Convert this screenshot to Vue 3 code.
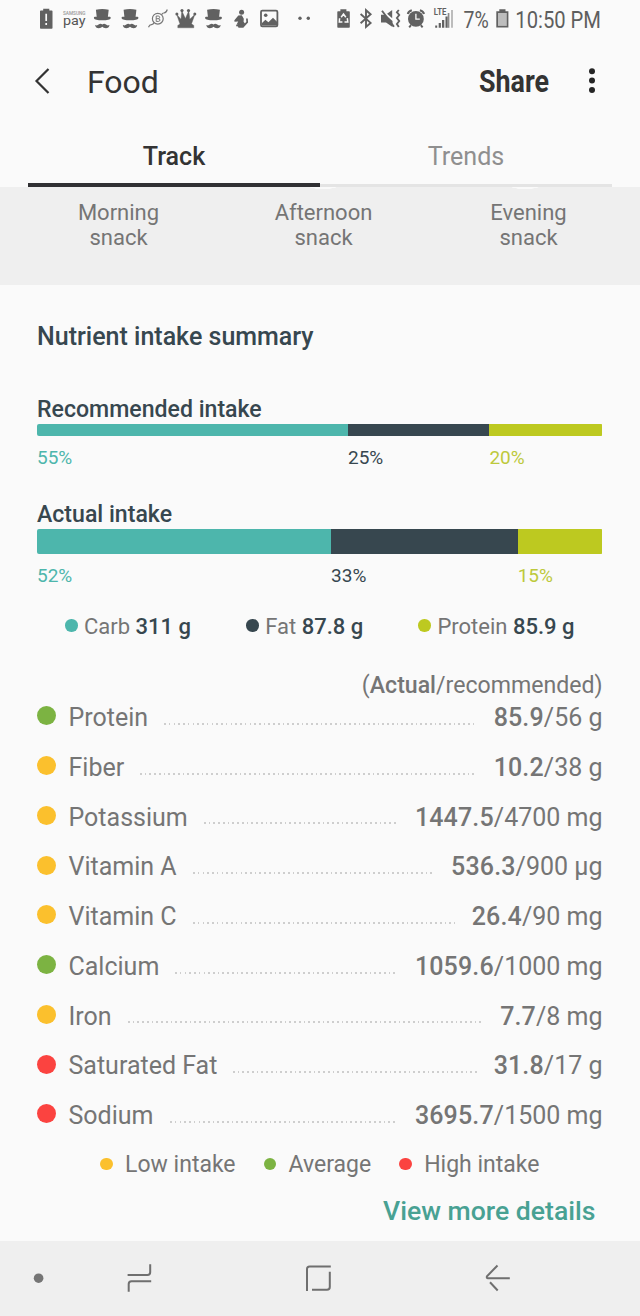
<script setup>
const meals = ['Morning', 'Afternoon', 'Evening']
const recommended = [
  { key: 'carb', pct: 55 },
  { key: 'fat', pct: 25 },
  { key: 'protein', pct: 20 },
]
const actual = [
  { key: 'carb', pct: 52 },
  { key: 'fat', pct: 33 },
  { key: 'protein', pct: 15 },
]
const macros = [
  { key: 'carb', name: 'Carb', value: '311 g' },
  { key: 'fat', name: 'Fat', value: '87.8 g' },
  { key: 'protein', name: 'Protein', value: '85.9 g' },
]
const nutrients = [
  { name: 'Protein', level: 'average', actual: '85.9', target: '/56 g' },
  { name: 'Fiber', level: 'low', actual: '10.2', target: '/38 g' },
  { name: 'Potassium', level: 'low', actual: '1447.5', target: '/4700 mg' },
  { name: 'Vitamin A', level: 'low', actual: '536.3', target: '/900 µg' },
  { name: 'Vitamin C', level: 'low', actual: '26.4', target: '/90 mg' },
  { name: 'Calcium', level: 'average', actual: '1059.6', target: '/1000 mg' },
  { name: 'Iron', level: 'low', actual: '7.7', target: '/8 mg' },
  { name: 'Saturated Fat', level: 'high', actual: '31.8', target: '/17 g' },
  { name: 'Sodium', level: 'high', actual: '3695.7', target: '/1500 mg' },
]
const levels = [
  { level: 'low', name: 'Low intake' },
  { level: 'average', name: 'Average' },
  { level: 'high', name: 'High intake' },
]
</script>

<template>
  <div class="screen">
    <header class="status">
      <svg class="notifications" width="276" height="40" viewBox="38 0 276 40" fill="#616161">
        <defs>
          <g id="gentleman">
            <path d="M2.6 0.6Q9 -1 15.4 0.6L14.6 7.6H16.6Q17.8 7.8 17.3 9.2Q16.6 11 9 11Q1.4 11 0.7 9.2Q0.2 7.8 1.4 7.6H3.4Z" />
            <path d="M9 15.2Q7 13.9 5.3 15.4Q4 16.8 1.8 15.8Q2.4 19 5.4 19Q8 18.8 9 17.5Q10 18.8 12.6 19Q15.6 19 16.2 15.8Q14 16.8 12.7 15.4Q11 13.9 9 15.2Z" />
          </g>
        </defs>
        <path d="M40 11.3Q40 10.5 40.8 10.5H43.2V8.7H49.3V10.5H51.7Q52.5 10.5 52.5 11.3V28Q52.5 28.7 51.7 28.7H40.8Q40 28.7 40 28Z" />
        <path d="M46.2 13.8V21M46.2 23V25" stroke="#fafafa" stroke-width="1.7" />
        <text x="63" y="14.8" class="brand-small" textLength="22.5" lengthAdjust="spacingAndGlyphs">SAMSUNG</text>
        <text x="63" y="24.8" class="brand" textLength="22.5" lengthAdjust="spacingAndGlyphs">pay</text>
        <use href="#gentleman" x="93.3" y="9.2" />
        <use href="#gentleman" x="121" y="9.2" />
        <g fill="none" stroke="#777" stroke-width="1.2">
          <circle cx="157.8" cy="18.7" r="5.4" />
          <path d="M148.5 27.2Q149.6 24.4 151.6 24.6Q153.4 24.4 154 22.6M161.6 14.8Q162.4 12.8 164 13Q166.4 12.6 167.3 9.5" />
          <path d="M156.2 16V21.4H158.5Q160 21.2 160 20Q159.8 18.8 158.3 18.7Q159.7 18.5 159.7 17.3Q159.5 16 158.2 16ZM156.2 18.7H158.3" stroke-width="1" />
        </g>
        <path d="M179.6 23L176.6 14.2L181 19.2L181.8 10.8L185.4 18.6L188.8 10.8L189.8 19.2L195 14.2L191.8 23Q191.2 23.6 192 24.3L193.8 25.4V27.8H177.8V25.4L179.6 24.3Q180.2 23.6 179.6 23Z" stroke="#616161" stroke-width="0.4" />
        <circle cx="176.9" cy="14.1" r="1.5" /><circle cx="182" cy="10.6" r="1.6" />
        <circle cx="188.5" cy="10.6" r="1.6" /><circle cx="194.8" cy="14.1" r="1.5" />
        <use href="#gentleman" x="204.5" y="9.2" />
        <circle cx="241.6" cy="12.3" r="2.5" />
        <path d="M238.3 15.6L241.8 15.2L243.8 18.8L243.6 21.8L245.1 23.8L243.5 27.7H238.5L237 23.8L238.2 21.4L234.6 21.8Q233.8 21 234.8 19.8Z" />
        <path d="M236.2 25.3L243.8 25.8L247.2 22.2L246.9 18.5" fill="none" stroke="#616161" stroke-width="1.7" />
        <rect x="261" y="10.7" width="16.4" height="15.6" rx="1.3" fill="none" stroke="#616161" stroke-width="1.8" />
        <circle cx="265.7" cy="15.2" r="1.8" />
        <path d="M262 25.5V23L265.4 19.7L268.4 22.2L273 17.8L277 21.8V25.5Z" />
        <circle cx="300" cy="18.3" r="1.7" /><circle cx="308.3" cy="18.3" r="1.7" />
      </svg>
      <svg class="system" width="269" height="40" viewBox="334 0 269 40" fill="#616161">
        <path d="M337.3 12Q337.3 11.2 338 11.2H340.4V9.2H346.4V11.2H349Q349.8 11.2 349.8 12V27Q349.8 27.7 349 27.7H338Q337.3 27.7 337.3 27Z" />
        <path d="M341.2 17.3L343.5 14L345.8 17.3M339.6 18.2L339.3 22H342.4M347.3 18.2L347.8 22H344.5" fill="none" stroke="#fafafa" stroke-width="1.5" />
        <path d="M360.6 14L370.6 22.9L366 27V10.2L370.6 14.3L360.6 23.2" fill="none" stroke="#616161" stroke-width="1.9" />
        <path d="M381 14.8H385.3L392.5 21V27L386 22.4H381Z" />
        <path d="M387.1 13.7L392.2 10V18.2Z" />
        <path d="M382 10.8L394 26.8" stroke="#616161" stroke-width="1.9" />
        <path d="M398.8 10L396.9 12.2L399.2 15L396.9 18L399.2 21L396.9 24L398.8 27" fill="none" stroke="#616161" stroke-width="1.9" />
        <circle cx="415.9" cy="18.9" r="7.9" />
        <path d="M407.8 14Q408.3 11.2 411.8 10.2M419.9 10.2Q423.5 11.2 424 14M411 25.2L409.2 27.3M420.8 25.2L422.6 27.3" fill="none" stroke="#616161" stroke-width="2" />
        <path d="M415.9 13.8V19.1H419.8" fill="none" stroke="#fafafa" stroke-width="1.3" />
        <text x="433.8" y="15.3" class="lte" textLength="12.5" lengthAdjust="spacingAndGlyphs">LTE</text>
        <path d="M435.2 25.5H437.2V27.8H435.2ZM438.7 23H440.9V27.8H438.7ZM442 20H444.3V27.8H442ZM445.5 16.5H447.7V27.8H445.5Z" />
        <path d="M447.7 13H449.4V27.8H447.7Z" fill="#8a8a8a" />
        <path d="M451 10H453V27.8H451Z" fill="#bcbcbc" />
        <text x="463.5" y="27.5" class="clock" textLength="25.2" lengthAdjust="spacingAndGlyphs">7%</text>
        <path d="M496.3 11.2H499.3V9.2H505.5V11.2H508.4V27.6H496.3Z" />
        <path d="M498 13H506.8V25.9H498Z" fill="#bdbdbd" />
        <text x="515.3" y="27.5" class="clock" textLength="85.7" lengthAdjust="spacingAndGlyphs">10:50 PM</text>
      </svg>
    </header>

    <div class="appbar">
      <svg class="back" width="18" height="28" viewBox="0 0 18 28"><path d="M15.5 2L3.5 14L15.5 26" fill="none" stroke="#333" stroke-width="2.2" /></svg>
      <h1>Food</h1>
      <svg class="share" width="72" height="40" viewBox="0 0 72 40"><text x="1" y="30" textLength="70" lengthAdjust="spacingAndGlyphs">Share</text></svg>
      <svg class="more" width="8" height="28" viewBox="0 0 8 28" fill="#252525"><circle cx="4" cy="4.2" r="3" /><circle cx="4" cy="13.6" r="3" /><circle cx="4" cy="23" r="3" /></svg>
    </div>

    <nav class="tabs">
      <div class="tab active"><span>Track</span></div>
      <div class="tab"><span>Trends</span></div>
    </nav>

    <section class="meals">
      <div v-for="m in meals" :key="m" class="meal">{{ m }}<br />snack</div>
    </section>

    <main class="summary">
      <h2>Nutrient intake summary</h2>

      <h3 class="rec-title">Recommended intake</h3>
      <div class="bar thin">
        <i v-for="s in recommended" :key="s.key" :class="s.key" :style="{ width: s.pct + '%' }"></i>
      </div>
      <div class="pcts">
        <span v-for="s in recommended" :key="s.key" :class="s.key" :style="{ width: s.pct + '%' }">{{ s.pct }}%</span>
      </div>

      <h3 class="act-title">Actual intake</h3>
      <div class="bar thick">
        <i v-for="s in actual" :key="s.key" :class="s.key" :style="{ width: s.pct + '%' }"></i>
      </div>
      <div class="pcts">
        <span v-for="s in actual" :key="s.key" :class="s.key" :style="{ width: s.pct + '%' }">{{ s.pct }}%</span>
      </div>

      <div class="macros">
        <div v-for="m in macros" :key="m.key" class="macro">
          <i class="dot" :class="m.key"></i><span>{{ m.name }} <b>{{ m.value }}</b></span>
        </div>
      </div>

      <div class="caption"><span>(<b>Actual</b>/recommended)</span></div>
      <div class="rows">
        <div v-for="n in nutrients" :key="n.name" class="row">
          <i class="big-dot" :class="n.level"></i>
          <span class="name">{{ n.name }}</span>
          <span class="leader"></span>
          <span class="value"><b>{{ n.actual }}</b>{{ n.target }}</span>
        </div>
      </div>

      <div class="levels">
        <div v-for="l in levels" :key="l.level" class="level">
          <i class="dot" :class="l.level"></i><span>{{ l.name }}</span>
        </div>
      </div>
      <div class="details"><span>View more details</span></div>
    </main>

    <footer class="navbar">
      <svg width="640" height="75" viewBox="0 1241 640 75" fill="none" stroke="#6f6f6f" stroke-width="2">
        <circle cx="38.6" cy="1278.2" r="4.8" fill="#757575" stroke="none" />
        <path d="M127.6 1275H147.5Q150.2 1275 150.2 1272.3V1264.2M151.2 1281.2H131.5Q128.7 1281.2 128.7 1284V1291.8" />
        <path d="M307 1291V1269Q307 1266.4 309.6 1266.4H330.8M329.8 1271.7V1287Q329.8 1289.8 327 1289.8H312" />
        <path d="M497.5 1265.5L487 1276.2Q486.3 1278.2 488 1278.2H509.8M490 1282.3L497.7 1290.5" />
      </svg>
    </footer>
  </div>
</template>

<style>
html, body { margin: 0; background: #fafafa; }
</style>

<style scoped>
.screen {
  width: 640px;
  height: 1316px;
  display: flex;
  flex-direction: column;
  background: #fafafa;
  font-family: Roboto, "Liberation Sans", sans-serif;
  color: #757575;
  overflow: hidden;
}
.screen * { box-sizing: border-box; }
h1, h2, h3 { margin: 0; font-weight: 500; }
b { font-weight: 500; }
i { display: block; flex: none; }
svg { display: block; flex: none; overflow: visible; }

.status { height: 40px; display: flex; padding-left: 38px; }
.system { margin-left: 20px; }
.brand { font-size: 13.5px; font-weight: 400; fill: #555; }
.brand-small { font-size: 5.5px; font-weight: 500; fill: #999; }
.lte { font-size: 8.5px; font-weight: 700; }
.clock { font-size: 24px; fill: #5e5e5e; }

.appbar { height: 84px; display: flex; align-items: center; padding-left: 33px; }
.back { margin-top: -2px; }
h1 { margin-left: 36px; font-size: 32px; line-height: 40px; font-weight: 400; color: #333; }
.share { margin-left: auto; }
.share text { font-size: 32px; font-weight: 700; fill: #333; }
.more { margin: -2px 44.5px 0 37.5px; }

.tabs { height: 63px; display: flex; padding: 0 28px; }
.tab {
  width: 292px;
  height: 63px;
  padding-top: 18px;
  text-align: center;
  font-size: 25.1px;
  line-height: 30px;
  color: #8f8f8f;
  box-shadow: inset 0 -3px #e4e4e4;
}
.tab.active { font-weight: 500; color: #333; box-shadow: inset 0 -4px #303033; }

.meals {
  height: 98px;
  display: flex;
  padding: 13px 9px 0 16px;
  background:
    radial-gradient(ellipse 14px 2px at 323px 0, #fafafa 90%, transparent),
    radial-gradient(ellipse 14px 2px at 525px 0, #fafafa 90%, transparent),
    #efefef;
}
.meal { width: 205px; text-align: center; font-size: 22px; line-height: 25px; }

.summary { height: 956px; padding: 0 37.5px 0 37px; display: flex; flex-direction: column; }
h2 { margin-top: 36px; font-size: 25px; line-height: 32px; color: #37474f; }
h3 { font-size: 23.1px; line-height: 28px; color: #37474f; }
.rec-title { margin-top: 43px; }
.act-title { margin-top: 31px; }
.bar { display: flex; border-radius: 2px; overflow: hidden; }
.thin { height: 12px; }
.thick { height: 25px; }
.bar i { height: 100%; }
.carb { background: #4db6ac; }
.fat { background: #37474f; }
.protein { background: #bdc920; }
.pcts { display: flex; margin-top: 9px; height: 25px; font-size: 19px; line-height: 25px; }
.pcts span { background: none; }
.pcts .carb { color: #4db6ac; }
.pcts .fat { color: #37474f; }
.pcts .protein { color: #bdc93b; }

.macros { display: flex; justify-content: space-between; margin: 24.5px 28px 0; height: 28px; }
.macro, .level { display: flex; align-items: center; font-size: 23px; line-height: 28px; white-space: nowrap; }
.macro { font-size: 22px; }
.macro b { color: #37474f; }
.dot { width: 12.5px; height: 12.5px; border-radius: 50%; margin: -2px 6.5px 0 0; }
.low { background: #fbc02d; }
.average { background: #7cb342; }
.high { background: #fb4340; }

.caption { margin-top: 31px; height: 28px; font-size: 23.1px; line-height: 28px; text-align: right; }
.rows { margin-top: -7.5px; }
.row { height: 49.75px; display: flex; align-items: center; font-size: 25px; line-height: 30px; white-space: nowrap; }
.name, .value { padding-top: 2.6px; }
.value b { letter-spacing: 0.15px; }
.big-dot { width: 19px; height: 19px; border-radius: 50%; margin: -2px 12.5px 0 0; }
.leader {
  flex: 1;
  height: 2px;
  margin: 14px 17px 0 16px;
  background: repeating-linear-gradient(90deg, #cecece 0 1.6px, transparent 1.6px 4.75px);
}

.levels { display: flex; justify-content: center; gap: 28px; height: 28px; margin-top: 11px; }
.level .dot { margin-right: 12.5px; }
.details { margin: 16px 7px 0 0; text-align: right; font-size: 26.6px; font-weight: 500; line-height: 32px; color: #48a193; }

.navbar { height: 75px; background: #efefef; }
</style>
